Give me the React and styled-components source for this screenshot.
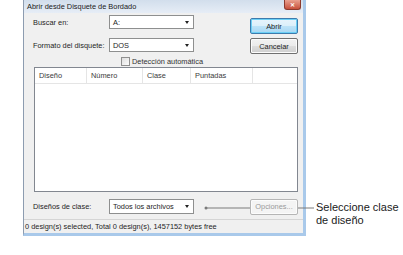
import React from "react";
import styled, { createGlobalStyle } from "styled-components";

const Global = createGlobalStyle`
  html, body { margin: 0; padding: 0; background: #ffffff; }
  body { font-family: "Liberation Sans", Arial, sans-serif; }
`;

const Page = styled.div`
  position: relative;
  width: 403px;
  height: 255px;
  overflow: hidden;
  background: #ffffff;
`;

const Dialog = styled.div`
  margin-left: 23px;
  width: 283px;
  height: 236px;
  box-sizing: border-box;
  border-left: 1px solid #8d9cb0;
  border-right: 3px solid #a9c9ea;
  border-bottom: 3px solid #a9c9ea;
  background: #dfe8f3;
  display: flex;
  flex-direction: column;
  font-size: 7.4px;
  color: #1e1e1e;
`;

const TitleBar = styled.div`
  height: 13px;
  display: flex;
  align-items: center;
  justify-content: space-between;
  padding-left: 3px;
  padding-right: 2px;
  background: linear-gradient(#d2deec, #e6edf6);
  font-size: 7.4px;
  color: #1a1a1a;
`;

const CloseBtn = styled.div`
  width: 15px;
  height: 9px;
  align-self: flex-start;
  border-radius: 0 0 3px 3px;
  border: 1px solid #8b3a2e;
  border-top: none;
  background: linear-gradient(#e9a08f, #c7503b);
  display: flex;
  align-items: center;
  justify-content: center;
  color: #ffffff;
  font-size: 6px;
  font-weight: bold;
  line-height: 1;
`;

const Body = styled.div`
  flex: 1;
  background: #f0f0f0;
  display: flex;
  flex-direction: column;
  padding: 0 5px 0 10px;
`;

const Top = styled.div`
  display: flex;
  justify-content: space-between;
`;

const FormCol = styled.div`
  display: flex;
  flex-direction: column;
`;

const Row = styled.div`
  display: flex;
  align-items: center;
  height: ${(p) => p.h || 14}px;
  margin-top: ${(p) => p.mt || 0}px;
`;

const Label = styled.div`
  width: 76px;
  margin-left: -1px;
`;

const Combo = styled.div`
  width: 85px;
  height: 100%;
  box-sizing: border-box;
  border: 1px solid #8e8f8f;
  background: #ffffff;
  display: flex;
  align-items: center;
  justify-content: space-between;
  padding: 0 4px 0 3px;
`;

const Arrow = styled.span`
  width: 0;
  height: 0;
  border-left: 2.5px solid transparent;
  border-right: 2.5px solid transparent;
  border-top: 3px solid #222;
`;

const Check = styled.div`
  display: flex;
  align-items: center;
  gap: 2px;
  margin-left: 87px;
  height: 10px;
  color: #333;
`;

const Box = styled.span`
  width: 9px;
  height: 9px;
  box-sizing: border-box;
  border: 1px solid #8f8f8f;
  background: linear-gradient(135deg, #dedede, #fbfbfb);
`;

const BtnCol = styled.div`
  display: flex;
  flex-direction: column;
  gap: 4px;
  padding-top: 5px;
`;

const Button = styled.div`
  position: relative;
  z-index: 1;
  width: 48px;
  height: 16px;
  box-sizing: border-box;
  border-radius: 2px;
  border: 1px solid ${(p) => (p.primary ? "#3d7bad" : p.disabled ? "#b5b5b5" : "#707070")};
  background: ${(p) =>
    p.disabled
      ? "#f4f4f4"
      : p.primary
      ? "linear-gradient(#e8f4fc 0%, #dbeffa 50%, #bde3f8 51%, #a8d7f3 100%)"
      : "linear-gradient(#f2f2f2 0%, #ebebeb 50%, #dddddd 51%, #cfcfcf 100%)"};
  box-shadow: ${(p) => (p.primary ? "inset 0 0 0 1px #6cd0f6" : "inset 0 0 0 1px #fcfcfc")};
  display: flex;
  align-items: center;
  justify-content: center;
  color: ${(p) => (p.disabled ? "#9a9a9a" : "#1e1e1e")};
`;

const List = styled.div`
  margin-top: 1px;
  width: 264px;
  height: 125px;
  box-sizing: border-box;
  border: 1px solid #828790;
  background: #ffffff;
`;

const Header = styled.div`
  display: grid;
  grid-template-columns: 52px 56px 48px 62px 1fr;
  height: 15px;
  border-bottom: 1px solid #e5e5e5;
`;

const HeadCell = styled.div`
  display: flex;
  align-items: center;
  padding-left: 4px;
  border-right: ${(p) => (p.last ? "none" : "1px solid #e5e5e5")};
  color: #3a3a3a;
`;

const Bottom = styled.div`
  display: flex;
  align-items: center;
  justify-content: space-between;
  height: 15px;
  margin-top: 7px;
`;

const BottomLeft = styled.div`
  display: flex;
  align-items: center;
  height: 15px;
`;

const Status = styled.div`
  margin: 5px -5px 0 -10px;
  height: 13px;
  border-top: 1px solid #d5d5d5;
  display: flex;
  align-items: center;
  padding-left: 1px;
  color: #1e1e1e;
`;

const Callout = styled.div`
  position: absolute;
  left: 204px;
  top: 201px;
  display: flex;
  align-items: flex-start;
`;

const Note = styled.div`
  margin-left: 2px;
  font-family: "Liberation Sans", Arial, sans-serif;
  font-size: 11px;
  line-height: 13px;
  color: #1a1a1a;
`;

const columns = ["Diseño", "Número", "Clase", "Puntadas"];

export default function App() {
  return (
    <Page>
      <Global />
      <Dialog>
        <TitleBar>
          <span>Abrir desde Disquete de Bordado</span>
          <CloseBtn>✕</CloseBtn>
        </TitleBar>
        <Body>
          <Top>
            <FormCol>
              <Row mt={2}>
                <Label>Buscar en:</Label>
                <Combo>
                  <span>A:</span>
                  <Arrow />
                </Combo>
              </Row>
              <Row mt={9}>
                <Label>Formato del disquete:</Label>
                <Combo>
                  <span>DOS</span>
                  <Arrow />
                </Combo>
              </Row>
              <Check style={{ marginTop: 4 }}>
                <Box />
                <span>Detección automática</span>
              </Check>
            </FormCol>
            <BtnCol>
              <Button primary>Abrir</Button>
              <Button>Cancelar</Button>
            </BtnCol>
          </Top>
          <List>
            <Header>
              {columns.map((c) => (
                <HeadCell key={c}>{c}</HeadCell>
              ))}
              <HeadCell last />
            </Header>
          </List>
          <Bottom>
            <BottomLeft>
              <Label>Diseños de clase:</Label>
              <Combo>
                <span>Todos los archivos</span>
                <Arrow />
              </Combo>
            </BottomLeft>
            <Button disabled>Opciones...</Button>
          </Bottom>
          <Status>0 design(s) selected, Total 0 design(s), 1457152 bytes free</Status>
        </Body>
      </Dialog>
      <Callout>
        <svg width="110" height="14" viewBox="0 0 110 14">
          <line x1="2" y1="7" x2="110" y2="7" stroke="#7a7a7a" strokeWidth="1" />
          <circle cx="2" cy="7" r="1.5" fill="#7a7a7a" />
        </svg>
        <Note>
          Seleccione clase
          <br />
          de diseño
        </Note>
      </Callout>
    </Page>
  );
}
